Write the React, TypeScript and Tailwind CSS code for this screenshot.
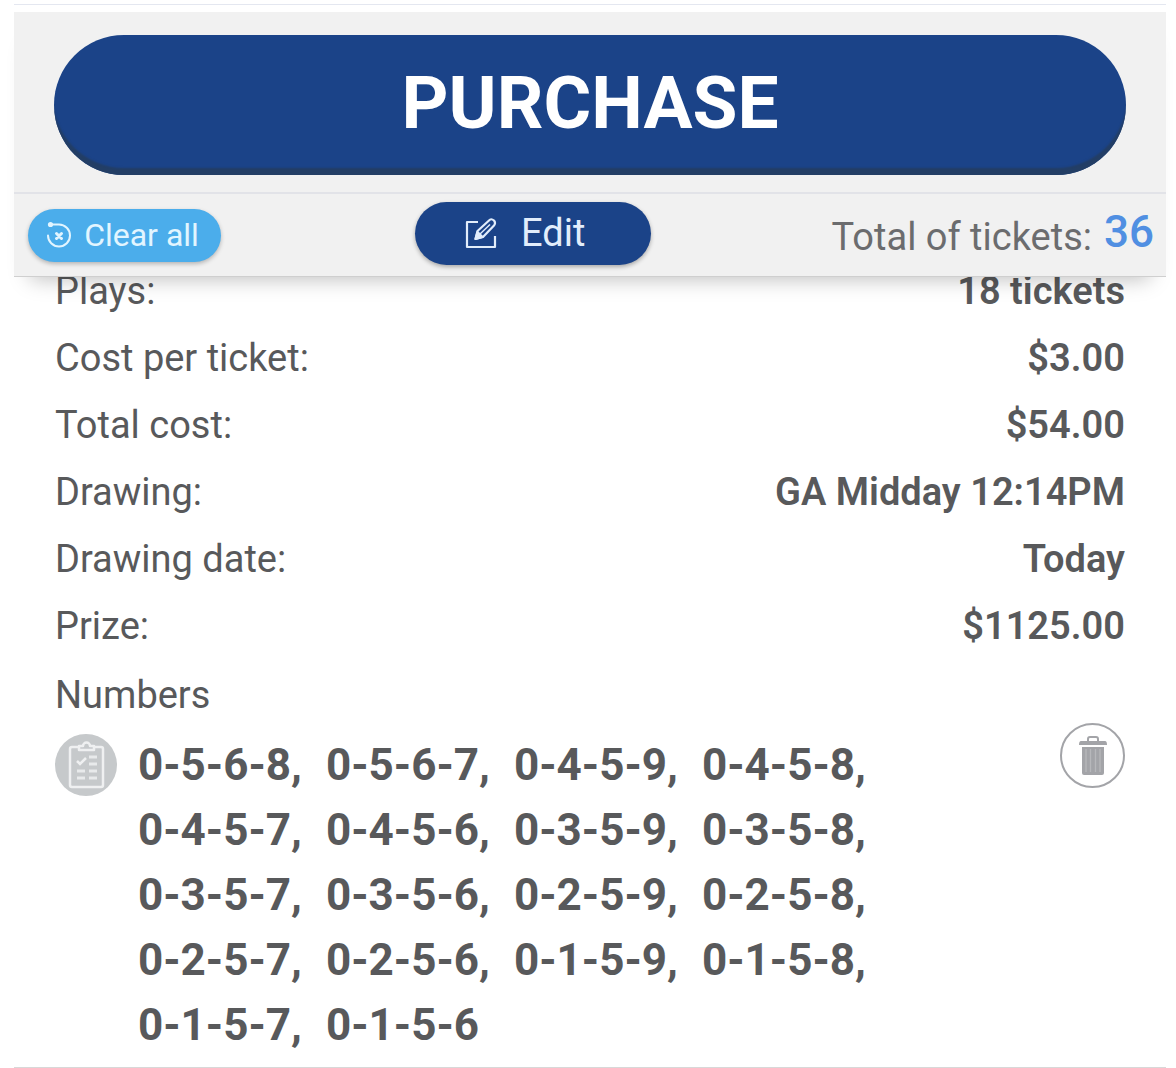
const details = [
  { label: "Plays:", value: "18 tickets" },
  { label: "Cost per ticket:", value: "$3.00" },
  { label: "Total cost:", value: "$54.00" },
  { label: "Drawing:", value: "GA Midday 12:14PM" },
  { label: "Drawing date:", value: "Today" },
  { label: "Prize:", value: "$1125.00" },
];

const numbers = [
  "0-5-6-8", "0-5-6-7", "0-4-5-9", "0-4-5-8",
  "0-4-5-7", "0-4-5-6", "0-3-5-9", "0-3-5-8",
  "0-3-5-7", "0-3-5-6", "0-2-5-9", "0-2-5-8",
  "0-2-5-7", "0-2-5-6", "0-1-5-9", "0-1-5-8",
  "0-1-5-7", "0-1-5-6",
];

function ClearIcon() {
  return (
    <svg aria-hidden="true" width="26" height="28" viewBox="0 0 26 28" fill="none" stroke="currentColor" strokeWidth="2" strokeLinecap="round">
      <path d="M5 3.500H13A11 11 0 1 1 2 14.500" />
      <circle cx="4.500" cy="3.500" r="2.600" fill="currentColor" stroke="none" />
      <path d="M10.500 12.500l5 5m0-5l-5 5" strokeWidth="3" />
    </svg>
  );
}

function EditIcon() {
  return (
    <svg aria-hidden="true" width="32" height="32" viewBox="0 0 32 32" fill="none" stroke="currentColor" strokeWidth="2.2" strokeLinejoin="round">
      <path d="M13 5H2v25h28V19" />
      <path d="M10.500 22l2-8L24 3.500q2-2.500 5 0 2 2.500 0 5L18 20z" />
      <path d="M15 17L25 7.500" strokeWidth="1.400" />
      <path d="M10.500 22l2-7 5 5z" fill="currentColor" />
    </svg>
  );
}

function ClipboardIcon() {
  return (
    <svg aria-hidden="true" className="size-[62px] shrink-0" viewBox="0 0 62 62" fill="none">
      <circle cx="31" cy="31" r="31" fill="#c6c9cb" />
      <rect x="15" y="13" width="33" height="40" rx="2" stroke="#eff0f1" strokeWidth="2.500" />
      <path d="M24 16v-4h4a3.500 3.500 0 0 1 7 0h4v4z" fill="#c6c9cb" stroke="#eff0f1" strokeWidth="2.500" strokeLinejoin="round" />
      <path d="M22 27l3 3 6-6" stroke="#eff0f1" strokeWidth="2.500" />
      <path d="M34 23h8M34 30h8M22 37h8M34 37h8M22 44h8M34 44h8" stroke="#e8eaeb" strokeWidth="3" />
    </svg>
  );
}

function TrashIcon() {
  return (
    <svg aria-hidden="true" width="30" height="40" viewBox="0 0 30 40" fill="none">
      <path d="M10 5V3q0-2 2-2h6q2 0 2 2v2" stroke="#a3a4a8" strokeWidth="2" />
      <path d="M3 5h24q2 0 2 4H1q0-4 2-4z" fill="#a3a4a8" />
      <path d="M4 11h22v26q0 2-2 2H6q-2 0-2-2z" fill="#a3a4a8" />
      <path d="M8 13v23M12.500 13v23M17.500 13v23M22 13v23" stroke="#b7b8bb" strokeWidth="1.300" />
    </svg>
  );
}

export default function App() {
  return (
    <main className="bg-white pt-1 pr-2.5 pl-3.5 font-[Roboto,sans-serif] text-[#58595b]">
      <div className="border-t border-[#e4e7f0] pt-[7px]">
        <header className="relative z-10 border-b border-[#cfcfcf] bg-[#f1f1f1] shadow-[0_18px_20px_-16px_rgba(0,0,0,0.26)]">
          <div className="border-b-2 border-[#e2e3e8] pt-[23px] pr-10 pb-[17px] pl-10">
            <button className="h-[140px] w-full rounded-full bg-[#1b4388] pb-1 text-[73px] leading-none font-bold text-white shadow-[inset_0_-8px_2px_-1px_#233e65]">
              PURCHASE
            </button>
          </div>
          <div className="flex h-[82px] items-center justify-between pr-3 pl-3.5">
            <button className="mr-3.5 flex h-[53px] w-[193px] items-center justify-center gap-3 rounded-full bg-[#4badeb] pr-1 text-[32px] leading-none text-[#e2f5ff] shadow-[0_2px_4px_rgba(0,0,0,0.25)]">
              <ClearIcon />
              Clear all
            </button>
            <button className="mb-1 flex h-[63px] w-[236px] items-center justify-center gap-6 rounded-full bg-[#1b4388] pr-4 text-[38px] leading-none text-[#e2edfb] shadow-[0_2px_4px_rgba(0,0,0,0.3)]">
              <EditIcon />
              Edit
            </button>
            <p className="flex items-center justify-end gap-3 pt-1 text-[38px] leading-none whitespace-nowrap text-[#6b6c6e]">
              Total of tickets:
              <strong className="pb-2.5 text-[44px] leading-none font-medium text-[#508fe2]">36</strong>
            </p>
          </div>
        </header>

        <section className="-mt-[19px] border-b border-[#d8d8d8] pr-[41px] pb-[9px] pl-[41px]">
          <dl className="text-[38px] leading-[67px]">
            {details.map(({ label, value }) => (
              <div key={label} className="flex justify-between">
                <dt>{label}</dt>
                <dd className="font-semibold">{value}</dd>
              </div>
            ))}
          </dl>
          <h2 className="text-[38px] leading-[70px]">Numbers</h2>
          <div className="flex items-start">
            <div className="pt-1">
              <ClipboardIcon />
            </div>
            <ul className="mt-[3px] ml-[21px] grid grid-cols-[repeat(4,188px)] text-[44px] leading-[65px] font-bold whitespace-nowrap">
              {numbers.map((number, index) => (
                <li key={number}>
                  {number}
                  {index < numbers.length - 1 && ","}
                </li>
              ))}
            </ul>
            <button aria-label="Delete numbers" className="-mt-[7px] ml-auto flex size-[65px] items-center justify-center rounded-full border-2 border-[#a3a4a8]">
              <TrashIcon />
            </button>
          </div>
        </section>
      </div>
    </main>
  );
}
